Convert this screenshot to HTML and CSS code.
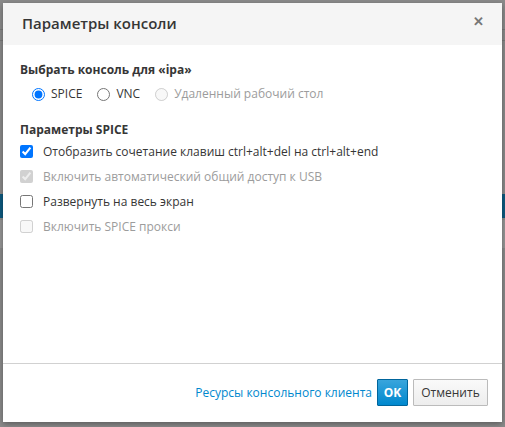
FILE: index.html
```html
<!DOCTYPE html>
<html lang="ru">
<head>
<meta charset="utf-8">
<link rel="stylesheet" href="styles.css">
</head>
<body>
<div class="backdrop">
  <div class="bg-line l1"></div>
  <div class="bg-line l2"></div>
  <div class="bg-band"></div>
  <div class="bg-light"></div>
</div>
<div class="modal">
  <div class="modal-header">
    <h4 class="modal-title">Параметры консоли</h4>
    <span class="close">&#x2715;</span>
  </div>
  <div class="modal-body">
    <div class="section-title">Выбрать консоль для «ipa»</div>
    <div class="radios">
      <label class="radio"><input type="radio" name="c" checked> SPICE</label>
      <label class="radio"><input type="radio" name="c"> VNC</label>
      <label class="radio disabled"><input type="radio" name="c" disabled> Удаленный рабочий стол</label>
    </div>
    <div class="section-title second">Параметры SPICE</div>
    <label class="check"><input type="checkbox" checked> Отобразить сочетание клавиш ctrl+alt+del на ctrl+alt+end</label>
    <label class="check disabled"><input type="checkbox" checked disabled> Включить автоматический общий доступ к USB</label>
    <label class="check"><input type="checkbox"> Развернуть на весь экран</label>
    <label class="check disabled"><input type="checkbox" disabled> Включить SPICE прокси</label>
  </div>
  <div class="modal-footer">
    <a class="link" href="#">Ресурсы консольного клиента</a>
    <button class="btn primary">OK</button>
    <button class="btn default">Отменить</button>
  </div>
</div>
</body>
</html>
```
FILE: styles.css
```css
html, body {
  margin: 0;
  padding: 0;
  width: 505px;
  height: 427px;
  overflow: hidden;
  font-family: "Open Sans", "Noto Sans", sans-serif;
}
body {
  background: #8b8b8b;
  position: relative;
}
.backdrop {
  position: absolute;
  inset: 0;
}
.bg-line {
  position: absolute;
  left: 0;
  right: 0;
  height: 1px;
  background: #7a7a7a;
}
.l1 { top: 29px; }
.l2 { top: 40px; }
.bg-band {
  position: absolute;
  left: 0;
  right: 0;
  top: 194px;
  height: 24px;
  background: #0d5a80;
}
.bg-light {
  position: absolute;
  left: 0;
  right: 0;
  top: 220px;
  height: 28px;
  background: #979797;
}
.modal {
  position: absolute;
  left: 3px;
  top: 3px;
  width: 499px;
  height: 419px;
  background: #fff;
  box-shadow: 0 2px 6px rgba(0,0,0,0.35);
  display: flex;
  flex-direction: column;
}
.modal-header {
  height: 42px;
  background: #f5f5f5;
  display: flex;
  align-items: center;
  justify-content: space-between;
  padding: 0 18px 2px 19px;
  box-sizing: border-box;
}
.modal-title {
  margin: 0;
  font-size: 15px;
  font-weight: 600;
  color: #363636;
}
.close {
  font-size: 13px;
  color: #777;
  font-weight: 700;
  margin-top: -4px;
}
.modal-body {
  flex: 1;
  padding: 16px 17px 0 17px;
  font-size: 12px;
  color: #363636;
}
.section-title {
  font-size: 12px;
  font-weight: 700;
  line-height: 18px;
}
.section-title.second {
  margin-top: 17px;
}
.radios {
  display: flex;
  gap: 12px;
  padding-left: 9px;
  margin-top: 5px;
  line-height: 20px;
}
.radio {
  display: flex;
  align-items: center;
  gap: 2px;
}
.radio input {
  margin: 0 4px 0 3px;
  width: 13px;
  height: 13px;
}
.check {
  display: flex;
  align-items: center;
  height: 25px;
}
.check input {
  margin: 0 10px 0 0;
  width: 13px;
  height: 13px;
}
.disabled {
  color: #9c9c9c;
}
.modal-footer {
  height: 59px;
  border-top: 1px solid #d1d1d1;
  box-sizing: border-box;
  display: flex;
  align-items: center;
  justify-content: flex-end;
  padding: 0 14px 2px 0;
  gap: 5px;
}
.link {
  color: #0088ce;
  text-decoration: none;
  font-size: 12px;
}
.btn {
  font-family: "Open Sans", "Noto Sans", sans-serif;
  font-size: 12px;
  height: 27px;
  box-sizing: border-box;
  border-radius: 1px;
  padding: 0 7px;
  cursor: pointer;
}
.primary {
  background: linear-gradient(#39a5dc, #0088ce);
  border: 1px solid #00659c;
  color: #fff;
  font-weight: 700;
  width: 31px;
  padding: 0;
}
.default {
  background: linear-gradient(#fafafa, #ededed);
  border: 1px solid #bbb;
  color: #363636;
  width: 75px;
}
```
